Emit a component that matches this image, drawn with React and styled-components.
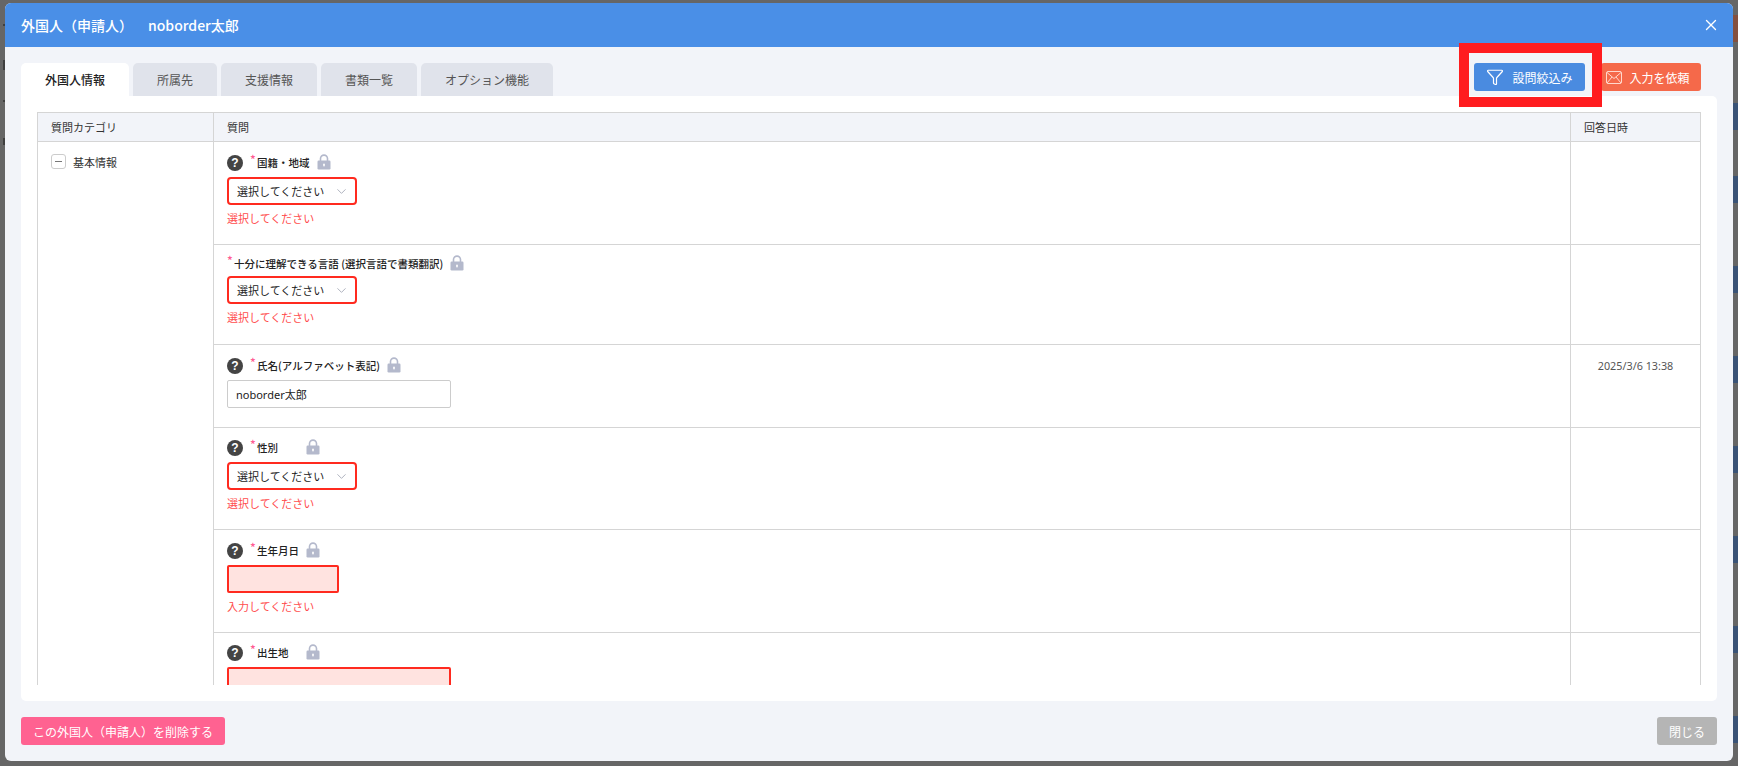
import React from "react";
import styled, { createGlobalStyle } from "styled-components";
import { X, Filter, ChevronDown } from "lucide-react";

const GlobalStyle = createGlobalStyle`
  html, body {
    margin: 0;
    padding: 0;
    height: 100%;
    overflow: hidden;
    background: #666666;
    font-family: "Noto Sans CJK JP", "Noto Sans", sans-serif;
  }
  * { box-sizing: border-box; }
`;

const Page = styled.div`
  position: relative;
  width: 1738px;
  height: 766px;
  padding: 3px 5px 5px;
  background: #666666;
  overflow: hidden;
`;

const BehindChip = styled.div`
  position: absolute;
  right: 0;
  top: ${({ $top }) => $top}px;
  width: 5px;
  height: 27px;
  background: ${({ $warm }) => ($warm ? "#84503f" : "#3a5376")};
`;

const BehindMark = styled.div`
  position: absolute;
  left: 3px;
  top: ${({ $top }) => $top}px;
  width: 2px;
  height: ${({ $h }) => $h}px;
  background: #3f3f3f;
`;

const Modal = styled.div`
  position: relative;
  height: 758px;
  display: flex;
  flex-direction: column;
  background: #f2f4f9;
  border-radius: 6px;
  overflow: hidden;
`;

const Header = styled.header`
  height: 44px;
  flex: none;
  display: flex;
  align-items: center;
  justify-content: space-between;
  padding: 0 16px;
  background: #4a8fe7;
  color: #fff;
`;

const Title = styled.h1`
  margin: 0;
  font-size: 14px;
  font-weight: 500;
  line-height: 20px;
`;

const TitleName = styled.span`
  margin-left: 15px;
`;

const CloseIcon = styled.button`
  display: flex;
  padding: 0;
  margin-right: -3px;
  border: 0;
  background: none;
  color: #fff;
`;

const Main = styled.div`
  flex: 1;
  min-height: 0;
  display: flex;
  flex-direction: column;
  padding: 16px 16px 0;
`;

const TabRow = styled.div`
  height: 33px;
  flex: none;
  display: flex;
  justify-content: space-between;
`;

const Tabs = styled.div`
  display: flex;
  gap: 4px;
`;

const Tab = styled.div`
  width: ${({ $w }) => $w}px;
  display: flex;
  align-items: center;
  justify-content: center;
  border-radius: 5px 5px 0 0;
  font-size: 12px;
  font-weight: ${({ $active }) => ($active ? 500 : 400)};
  color: ${({ $active }) => ($active ? "#222" : "#555")};
  background: ${({ $active }) => ($active ? "#fff" : "#e0e3eb")};
`;

const Actions = styled.div`
  display: flex;
  gap: 16px;
  height: 28px;
  margin-right: 16px;
`;

const Highlighted = styled.div`
  position: relative;
  display: flex;
`;

const HighlightFrame = styled.div`
  position: absolute;
  inset: -20px -17px -16px -15px;
  border: 10px solid #ff1c1f;
  z-index: 2;
`;

const ActionButton = styled.button`
  width: ${({ $w }) => $w}px;
  height: 28px;
  display: flex;
  align-items: center;
  justify-content: center;
  gap: ${({ $gap }) => $gap}px;
  padding: 0 ${({ $shift }) => $shift || 0}px 0 0;
  border: 0;
  border-radius: 3px;
  background: ${({ $bg }) => $bg};
  color: #fff;
  font-family: inherit;
  font-size: 12px;
  font-weight: 400;
`;

const MailIcon = styled.svg`
  width: 16px;
  height: 13px;
  fill: none;
  stroke: #ffd8cc;
  stroke-width: 1;
`;

const Panel = styled.section`
  flex: 1;
  min-height: 0;
  padding: 16px 16px 16px;
  background: #fff;
  border-radius: 0 5px 5px 5px;
`;

const Table = styled.div`
  height: 573px;
  overflow: hidden;
  border-left: 1px solid #d5d5d5;
  border-right: 1px solid #d5d5d5;
  border-top: 1px solid #d5d5d5;
`;

const HeadRow = styled.div`
  height: 29px;
  display: grid;
  grid-template-columns: 176px 1357px 1fr;
  background: #f2f4f9;
  border-bottom: 1px solid #d5d5d5;
`;

const HeadCell = styled.div`
  display: flex;
  align-items: center;
  padding-left: 13px;
  font-size: 11px;
  color: #333;
  border-right: ${({ $last }) => ($last ? "0" : "1px solid #d5d5d5")};
`;

const TableBody = styled.div`
  display: flex;
`;

const CategoryCell = styled.div`
  width: 176px;
  flex: none;
  display: flex;
  align-items: flex-start;
  gap: 7px;
  padding: 12px 13px;
  border-right: 1px solid #d5d5d5;
`;

const Toggle = styled.span`
  width: 15px;
  height: 15px;
  flex: none;
  display: flex;
  align-items: center;
  justify-content: center;
  border: 1px solid #ccc;
  border-radius: 3px;
  &::before {
    content: "";
    width: 7px;
    height: 1px;
    background: #777;
  }
`;

const CategoryName = styled.span`
  font-size: 11px;
  line-height: 16px;
  color: #333;
`;

const Questions = styled.div`
  flex: 1;
`;

const QuestionRow = styled.div`
  height: ${({ $h }) => $h}px;
  display: grid;
  grid-template-columns: 1357px 1fr;
  border-bottom: 1px solid #d5d5d5;
`;

const QuestionCell = styled.div`
  padding: ${({ $top }) => $top}px 13px 0;
  border-right: 1px solid #d5d5d5;
`;

const DateCell = styled.div`
  padding-top: 12px;
  text-align: center;
  font-family: "Noto Sans", sans-serif;
  font-size: 10.8px;
  line-height: 18px;
  color: #555;
`;

const LabelRow = styled.div`
  height: 18px;
  display: flex;
  align-items: center;
  margin-bottom: ${({ $flat }) => ($flat ? 3 : 5)}px;
`;

const Help = styled.span`
  width: 16px;
  height: 16px;
  flex: none;
  margin-right: 7px;
  display: flex;
  align-items: center;
  justify-content: center;
  border-radius: 50%;
  background: #444;
  color: #fff;
  font-family: "Liberation Sans", sans-serif;
  font-size: 12px;
  font-weight: 700;
`;

const Required = styled.span`
  width: 7px;
  flex: none;
  align-self: flex-start;
  margin-top: -2px;
  color: #ff5c93;
  font-size: 12px;
  font-weight: 500;
  line-height: 14px;
`;

const LabelText = styled.span`
  min-width: ${({ $min }) => $min || 0}px;
  font-size: 10.5px;
  font-weight: 500;
  line-height: 14px;
  color: #222;
`;

const LockIcon = styled.svg`
  width: 14px;
  height: 16px;
  flex: none;
  margin-left: 7px;
  margin-top: -2px;
`;

const SelectBox = styled.div`
  width: 130px;
  height: 28px;
  display: flex;
  align-items: center;
  justify-content: space-between;
  padding: 0 6px 0 8px;
  border: 2px solid #ff2a1f;
  border-radius: 4px;
  background: #fff;
  font-size: 11px;
  color: #222;
  svg { color: #9499aa; }
`;

const TextBox = styled.div`
  width: ${({ $w }) => $w}px;
  height: 28px;
  display: flex;
  align-items: center;
  padding: 0 8px;
  border: ${({ $error }) => ($error ? "2px solid #ff2a1f" : "1px solid #ccc")};
  border-radius: 2px;
  background: ${({ $error }) => ($error ? "#ffe3e0" : "#fff")};
  font-family: "Noto Sans", "Noto Sans CJK JP", sans-serif;
  font-size: 11px;
  color: #222;
`;

const ErrorText = styled.div`
  margin-top: 5px;
  font-size: 11px;
  line-height: 16px;
  color: #ff4d4d;
`;

const Footer = styled.footer`
  height: 60px;
  flex: none;
  display: flex;
  align-items: flex-start;
  justify-content: space-between;
  padding: 16px 16px 0;
`;

const Lock = () => (
  <LockIcon viewBox="0 0 14 16">
    <path d="M3.5 7V4.6a3.5 3.5 0 0 1 7 0V7" fill="none" stroke="#b4b9cc" strokeWidth="1.6" />
    <rect x="0.5" y="6.5" width="13" height="9" rx="1.2" fill="#b4b9cc" />
    <rect x="6.2" y="9.5" width="1.6" height="3" rx="0.8" fill="#fff" />
  </LockIcon>
);

const Label = ({ help = true, min, children }) => (
  <LabelRow $flat={!help}>
    {help && <Help>?</Help>}
    <Required>*</Required>
    <LabelText $min={min}>{children}</LabelText>
    <Lock />
  </LabelRow>
);

const Select = () => (
  <SelectBox>
    選択してください
    <ChevronDown size={15} strokeWidth={1.2} />
  </SelectBox>
);

const tabs = [
  { name: "外国人情報", w: 108, active: true },
  { name: "所属先", w: 84 },
  { name: "支援情報", w: 96 },
  { name: "書類一覧", w: 96 },
  { name: "オプション機能", w: 132 },
];

const behindChips = [103, 176, 266, 356, 446, 536, 626, 716];
const behindMarks = [
  { top: 24, h: 2 },
  { top: 60, h: 10 },
  { top: 100, h: 2 },
  { top: 138, h: 7 },
];

export default function App() {
  return (
    <Page>
      <GlobalStyle />
      <BehindChip $top={15} $warm />
      {behindChips.map((top) => (
        <BehindChip key={top} $top={top} />
      ))}
      {behindMarks.map((m) => (
        <BehindMark key={m.top} $top={m.top} $h={m.h} />
      ))}
      <Modal>
        <Header>
          <Title>
            外国人（申請人）<TitleName>noborder太郎</TitleName>
          </Title>
          <CloseIcon aria-label="閉じる">
            <X size={18} strokeWidth={1.8} />
          </CloseIcon>
        </Header>
        <Main>
          <TabRow>
            <Tabs>
              {tabs.map((t) => (
                <Tab key={t.name} $w={t.w} $active={t.active}>
                  {t.name}
                </Tab>
              ))}
            </Tabs>
            <Actions>
              <Highlighted>
                <ActionButton $w={111} $gap={8} $bg="#4a8be0">
                  <Filter size={18} strokeWidth={1.6} />
                  設問絞込み
                </ActionButton>
                <HighlightFrame />
              </Highlighted>
              <ActionButton $w={100} $gap={7} $shift={6} $bg="#f5694a">
                <MailIcon viewBox="0 0 16 13">
                  <rect x="0.5" y="0.5" width="15" height="12" rx="1.5" />
                  <path d="M1 1.5l7 6 7-6M1 12l5-6M15 12l-5-6" />
                </MailIcon>
                入力を依頼
              </ActionButton>
            </Actions>
          </TabRow>
          <Panel>
            <Table>
              <HeadRow>
                <HeadCell>質問カテゴリ</HeadCell>
                <HeadCell>質問</HeadCell>
                <HeadCell $last>回答日時</HeadCell>
              </HeadRow>
              <TableBody>
                <CategoryCell>
                  <Toggle />
                  <CategoryName>基本情報</CategoryName>
                </CategoryCell>
                <Questions>
                  <QuestionRow $h={103}>
                    <QuestionCell $top={12}>
                      <Label>国籍・地域</Label>
                      <Select />
                      <ErrorText>選択してください</ErrorText>
                    </QuestionCell>
                    <DateCell />
                  </QuestionRow>
                  <QuestionRow $h={100}>
                    <QuestionCell $top={10}>
                      <Label help={false}>十分に理解できる言語 (選択言語で書類翻訳)</Label>
                      <Select />
                      <ErrorText>選択してください</ErrorText>
                    </QuestionCell>
                    <DateCell />
                  </QuestionRow>
                  <QuestionRow $h={83}>
                    <QuestionCell $top={12}>
                      <Label>氏名(アルファベット表記)</Label>
                      <TextBox $w={224}>noborder太郎</TextBox>
                    </QuestionCell>
                    <DateCell>2025/3/6 13:38</DateCell>
                  </QuestionRow>
                  <QuestionRow $h={102}>
                    <QuestionCell $top={11}>
                      <Label min={42}>性別</Label>
                      <Select />
                      <ErrorText>選択してください</ErrorText>
                    </QuestionCell>
                    <DateCell />
                  </QuestionRow>
                  <QuestionRow $h={103}>
                    <QuestionCell $top={12}>
                      <Label min={42}>生年月日</Label>
                      <TextBox $w={112} $error />
                      <ErrorText>入力してください</ErrorText>
                    </QuestionCell>
                    <DateCell />
                  </QuestionRow>
                  <QuestionRow $h={103}>
                    <QuestionCell $top={11}>
                      <Label min={42}>出生地</Label>
                      <TextBox $w={224} $error />
                    </QuestionCell>
                    <DateCell />
                  </QuestionRow>
                </Questions>
              </TableBody>
            </Table>
          </Panel>
        </Main>
        <Footer>
          <ActionButton $w={204} $bg="#ff6291">この外国人（申請人）を削除する</ActionButton>
          <ActionButton $w={60} $bg="#b5b5b5">閉じる</ActionButton>
        </Footer>
      </Modal>
    </Page>
  );
}
